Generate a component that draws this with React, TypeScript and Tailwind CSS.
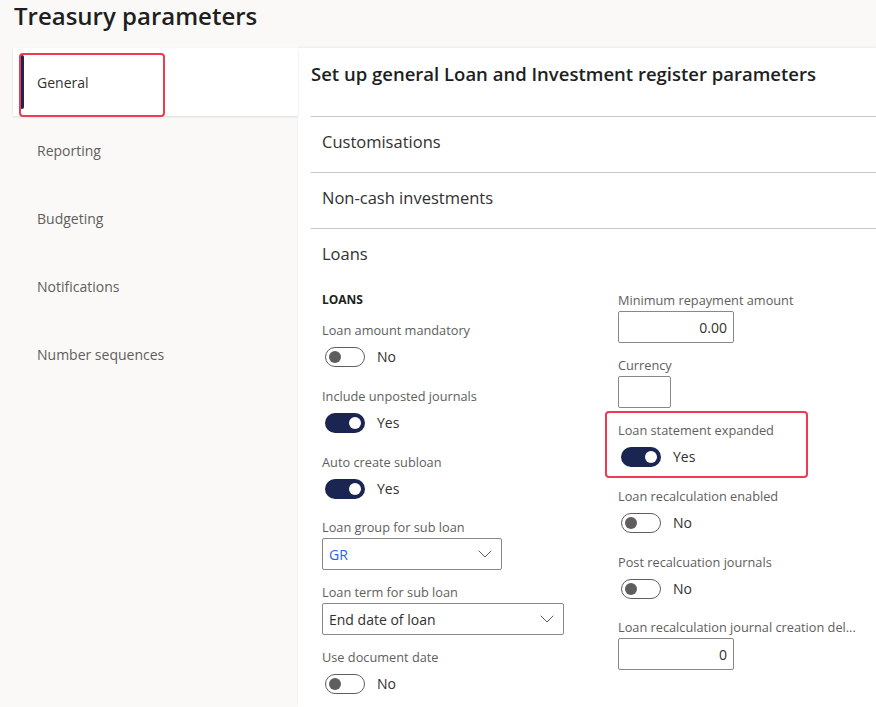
import { ChevronDown } from 'lucide-react';

const FONT = 'font-["Segoe_UI","Open_Sans",sans-serif]';

function Toggle({ on }: { on: boolean }) {
    return (
        <div className="flex items-center h-[20px]">
            {on ? (
                <div className="w-[40px] h-[20px] rounded-full bg-[#1b2551] flex items-center justify-end pr-[4px]">
                    <div className="w-[12px] h-[12px] rounded-full bg-white" />
                </div>
            ) : (
                <div className="w-[40px] h-[20px] rounded-full border border-[#605e5c] flex items-center pl-[3px]">
                    <div className="w-[12px] h-[12px] rounded-full bg-[#605e5c]" />
                </div>
            )}
            <span className="ml-[12px] text-[14px] text-[#323130] leading-[20px]">{on ? 'Yes' : 'No'}</span>
        </div>
    );
}

function Label({ text, className = '' }: { text: string; className?: string }) {
    return <div className={`h-[18px] leading-[18px] text-[12.75px] text-[#605e5c] whitespace-nowrap ${className}`}>{text}</div>;
}

function ToggleField({ label, on, className = '' }: { label: string; on: boolean; className?: string }) {
    return (
        <div className={className}>
            <Label text={label} />
            <div className="mt-[8px] pl-[3px]">
                <Toggle on={on} />
            </div>
        </div>
    );
}

function SelectField({ label, value, width, blue, className = '' }: { label: string; value: string; width: string; blue?: boolean; className?: string }) {
    return (
        <div className={className}>
            <Label text={label} />
            <div className={`mt-[2px] h-[32px] ${width} border border-[#8a8886] rounded-[2px] flex items-center justify-between pl-[6px] pr-[4px]`}>
                <span className={`text-[14px] ${blue ? 'text-[#2266e3]' : 'text-[#323130]'}`}>{value}</span>
                <ChevronDown size={24} strokeWidth={1} className="text-[#605e5c]" />
            </div>
        </div>
    );
}

function InputField({ label, value, width, className = '' }: { label: string; value: string; width: string; className?: string }) {
    return (
        <div className={className}>
            <Label text={label} />
            <div className={`mt-[2px] h-[32px] ${width} border border-[#8a8886] rounded-[2px] flex items-center justify-end pr-[6px]`}>
                <span className="text-[14px] text-[#323130]">{value}</span>
            </div>
        </div>
    );
}

export default function App() {
    const navItems = ['Reporting', 'Budgeting', 'Notifications', 'Number sequences'];
    const sections = ['Customisations', 'Non-cash investments'];

    return (
        <div className={`relative w-[876px] h-[707px] bg-[#faf9f8] overflow-hidden ${FONT}`}>
            {/* Page title */}
            <div className="h-[48px] pl-[14px] pt-[1px]">
                <h1 className="text-[24px] leading-[30px] font-semibold text-[#201f1e]">Treasury parameters</h1>
            </div>

            <div className="flex ml-[13px] h-[659px]">
                {/* Left nav */}
                <div className="w-[285px] shrink-0">
                    <div className="relative h-[68px] bg-white shadow-[0_1px_2px_rgba(0,0,0,0.12)] flex items-center pl-[24px]">
                        <div className="absolute left-[7px] top-[7px] bottom-[7px] w-[4px] rounded-[2px] bg-[#1b2551]" />
                        <span className="text-[14px] text-[#323130]">General</span>
                    </div>
                    {navItems.map((item) => (
                        <div key={item} className="h-[68px] flex items-center pl-[24px]">
                            <span className="text-[14px] text-[#605e5c]">{item}</span>
                        </div>
                    ))}
                </div>

                {/* Content */}
                <div className="flex-1 bg-white pl-[13px] shadow-[0_-1px_2px_rgba(0,0,0,0.06)]">
                    <h2 className="pt-[13px] h-[68px] text-[18.5px] leading-[26px] font-semibold text-[#201f1e] whitespace-nowrap">
                        Set up general Loan and Investment register parameters
                    </h2>
                    {sections.map((s) => (
                        <div key={s} className="h-[56px] border-t border-[#c8c6c4] pl-[11px] pt-[13px]">
                            <span className="text-[16.5px] leading-[24px] font-medium text-[#323130]">{s}</span>
                        </div>
                    ))}
                    <div className="border-t border-[#c8c6c4] pl-[11px] pt-[13px]">
                        <div className="text-[16.5px] leading-[24px] font-medium text-[#323130]">Loans</div>

                        <div className="flex mt-[25px]">
                            {/* Left column */}
                            <div className="w-[296px] shrink-0">
                                <div className="h-[16px] leading-[16px] text-[12px] font-bold text-[#201f1e] mt-[1px]">LOANS</div>
                                <ToggleField label="Loan amount mandatory" on={false} className="mt-[13px]" />
                                <ToggleField label="Include unposted journals" on={true} className="mt-[20px]" />
                                <ToggleField label="Auto create subloan" on={true} className="mt-[20px]" />
                                <SelectField label="Loan group for sub loan" value="GR" blue width="w-[180px]" className="mt-[19px]" />
                                <SelectField label="Loan term for sub loan" value="End date of loan" width="w-[242px]" className="mt-[13px]" />
                                <ToggleField label="Use document date" on={false} className="mt-[13px]" />
                            </div>

                            {/* Right column */}
                            <div className="flex-1">
                                <InputField label="Minimum repayment amount" value="0.00" width="w-[116px]" />
                                <InputField label="Currency" value="" width="w-[53px]" className="mt-[13px]" />
                                <ToggleField label="Loan statement expanded" on={true} className="mt-[13px]" />
                                <ToggleField label="Loan recalculation enabled" on={false} className="mt-[20px]" />
                                <ToggleField label="Post recalcuation journals" on={false} className="mt-[20px]" />
                                <InputField label="Loan recalculation journal creation del..." value="0" width="w-[116px]" className="mt-[19px]" />
                            </div>
                        </div>
                    </div>
                </div>
            </div>

            {/* Annotation boxes */}
            <div className="absolute left-[19px] top-[53px] w-[146px] h-[64px] border-2 border-[#ee3b52] rounded-[4px] pointer-events-none" />
            <div className="absolute left-[605px] top-[411px] w-[203px] h-[67px] border-2 border-[#ee3b52] rounded-[4px] pointer-events-none" />
        </div>
    );
}
